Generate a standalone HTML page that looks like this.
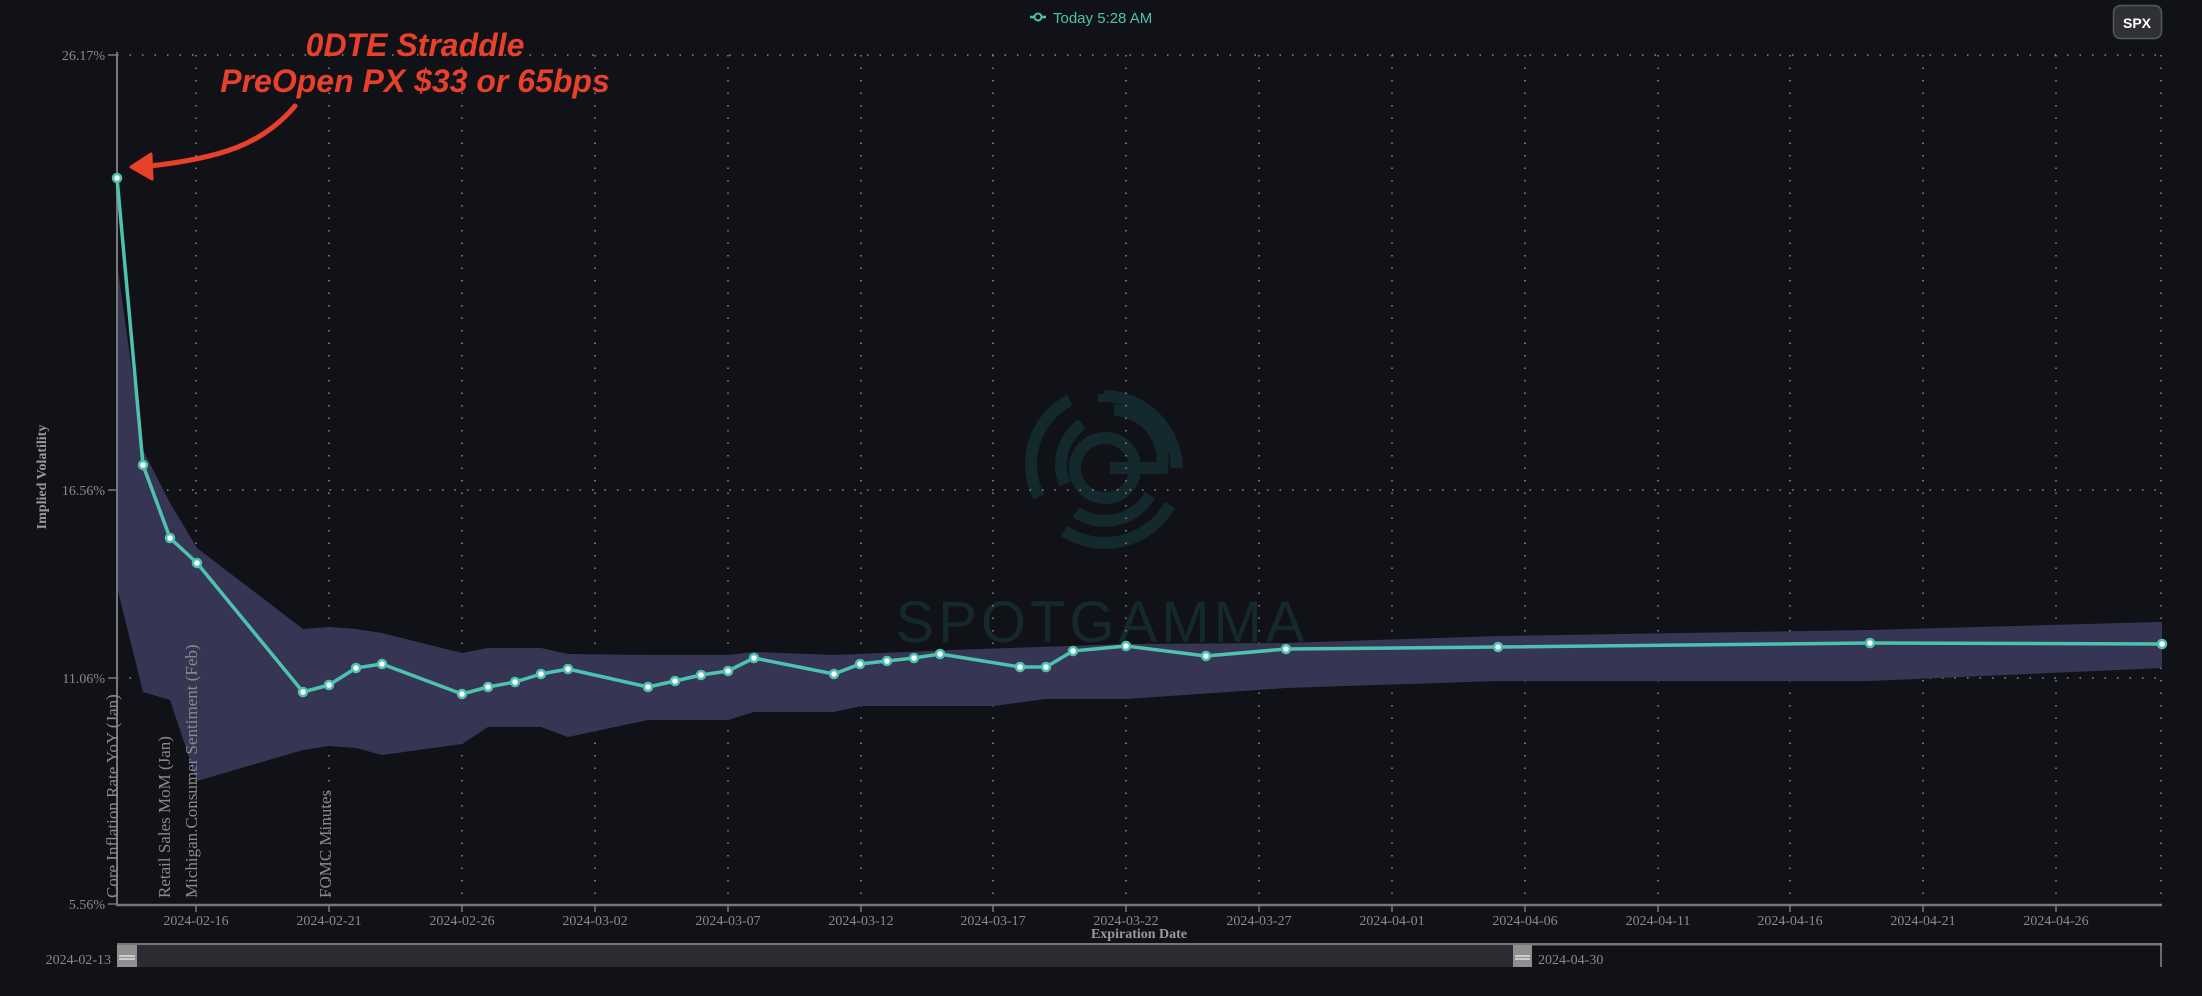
<!DOCTYPE html>
<html><head><meta charset="utf-8"><style>
html,body{margin:0;padding:0;background:#101217;}
body{width:2202px;height:996px;overflow:hidden;position:relative;}
</style></head><body>
<svg width="2202" height="996" viewBox="0 0 2202 996" xmlns="http://www.w3.org/2000/svg" style="position:absolute;left:0;top:0">
<rect width="2202" height="996" fill="#101217"/>
<!-- watermark -->
<g fill="none" stroke="#14292d" stroke-width="12">
<path d="M1070 400 A72 72 0 0 0 1039 497"/>
<path d="M1104 394 L1104 396 A74 74 0 0 1 1177 468"/>
<path d="M1170 505 A75 75 0 0 1 1064 531"/>
<path d="M1082 424 A50 50 0 0 0 1065 484"/>
<path d="M1114 410 A50 50 0 0 1 1162 468 L1110 468"/>
<path d="M1150 495 A52 52 0 0 1 1076 512"/>
<circle cx="1105" cy="468" r="30"/>
</g>
<text x="1102" y="642" text-anchor="middle" font-family="Liberation Sans, sans-serif" font-size="58" fill="#14292d" letter-spacing="4">SPOTGAMMA</text>
<!-- grid -->
<g stroke="#8a8a8a" stroke-width="1.5" stroke-dasharray="1.5 11">
<line x1="117" y1="55" x2="2162" y2="55"/>
<line x1="117" y1="490" x2="2162" y2="490"/>
<line x1="117" y1="678" x2="2162" y2="678"/>
<line x1="196" y1="55" x2="196" y2="904"/>
<line x1="329" y1="55" x2="329" y2="904"/>
<line x1="462" y1="55" x2="462" y2="904"/>
<line x1="595" y1="55" x2="595" y2="904"/>
<line x1="728" y1="55" x2="728" y2="904"/>
<line x1="861" y1="55" x2="861" y2="904"/>
<line x1="993" y1="55" x2="993" y2="904"/>
<line x1="1126" y1="55" x2="1126" y2="904"/>
<line x1="1259" y1="55" x2="1259" y2="904"/>
<line x1="1392" y1="55" x2="1392" y2="904"/>
<line x1="1525" y1="55" x2="1525" y2="904"/>
<line x1="1658" y1="55" x2="1658" y2="904"/>
<line x1="1790" y1="55" x2="1790" y2="904"/>
<line x1="1923" y1="55" x2="1923" y2="904"/>
<line x1="2056" y1="55" x2="2056" y2="904"/>
<line x1="2161" y1="55" x2="2161" y2="904"/>
</g>
<!-- band -->
<path fill="#363654" d="M117 263 L143 450 L170 503 L197 548 L303 629 L329 627 L356 629 L382 633 L462 653 L488 648 L541 648 L568 654 L648 655 L728 655 L754 652 L834 655 L951 650 L1126 644 L1286 643 L1498 636 L1870 630 L2162 622 L2162 668 L1870 681 L1498 681 L1286 688 L1126 699 L1046 699 L993 706 L861 706 L834 712 L754 712 L728 720 L648 720 L568 737 L541 727 L488 727 L462 744 L382 755 L356 748 L329 746 L303 750 L197 781 L170 700 L143 692 L117 587 Z"/>
<!-- axes -->
<line x1="117" y1="52" x2="117" y2="905" stroke="#777" stroke-width="2"/>
<line x1="116" y1="905" x2="2162" y2="905" stroke="#777" stroke-width="2.5"/>
<g stroke="#777" stroke-width="1.5">
<line x1="108" y1="55" x2="117" y2="55"/><line x1="108" y1="490" x2="117" y2="490"/><line x1="108" y1="678" x2="117" y2="678"/><line x1="108" y1="904" x2="117" y2="904"/>
<line x1="196" y1="905" x2="196" y2="912"/><line x1="329" y1="905" x2="329" y2="912"/><line x1="462" y1="905" x2="462" y2="912"/><line x1="595" y1="905" x2="595" y2="912"/><line x1="728" y1="905" x2="728" y2="912"/><line x1="861" y1="905" x2="861" y2="912"/><line x1="993" y1="905" x2="993" y2="912"/><line x1="1126" y1="905" x2="1126" y2="912"/><line x1="1259" y1="905" x2="1259" y2="912"/><line x1="1392" y1="905" x2="1392" y2="912"/><line x1="1525" y1="905" x2="1525" y2="912"/><line x1="1658" y1="905" x2="1658" y2="912"/><line x1="1790" y1="905" x2="1790" y2="912"/><line x1="1923" y1="905" x2="1923" y2="912"/><line x1="2056" y1="905" x2="2056" y2="912"/>
</g>
<g font-family="Liberation Serif, serif" font-size="14" fill="#8a8a8a" text-anchor="end">
<text x="105" y="60">26.17%</text><text x="105" y="495">16.56%</text><text x="105" y="683">11.06%</text><text x="105" y="909">5.56%</text>
</g>
<g font-family="Liberation Serif, serif" font-size="14" fill="#8a8a8a" text-anchor="middle">
<text x="196" y="925">2024-02-16</text><text x="329" y="925">2024-02-21</text><text x="462" y="925">2024-02-26</text><text x="595" y="925">2024-03-02</text><text x="728" y="925">2024-03-07</text><text x="861" y="925">2024-03-12</text><text x="993" y="925">2024-03-17</text><text x="1126" y="925">2024-03-22</text><text x="1259" y="925">2024-03-27</text><text x="1392" y="925">2024-04-01</text><text x="1525" y="925">2024-04-06</text><text x="1658" y="925">2024-04-11</text><text x="1790" y="925">2024-04-16</text><text x="1923" y="925">2024-04-21</text><text x="2056" y="925">2024-04-26</text>
</g>
<text x="1139" y="938" text-anchor="middle" font-family="Liberation Serif, serif" font-weight="bold" font-size="14" fill="#9a9a9a">Expiration Date</text>
<text transform="translate(46,477) rotate(-90)" text-anchor="middle" font-family="Liberation Serif, serif" font-weight="bold" font-size="14" fill="#9a9a9a">Implied Volatility</text>
<!-- event labels -->
<g font-family="Liberation Serif, serif" font-size="17" fill="#8a8a8a">
<text transform="translate(118,898) rotate(-90)">Core Inflation Rate YoY (Jan)</text>
<text transform="translate(170,898) rotate(-90)">Retail Sales MoM (Jan)</text>
<text transform="translate(197,898) rotate(-90)">Michigan Consumer Sentiment (Feb)</text>
<text transform="translate(331,898) rotate(-90)">FOMC Minutes</text>
</g>
<!-- line -->
<polyline fill="none" stroke="#4ec2ae" stroke-width="3.5" stroke-linejoin="round" points="117,178 143,465 170,538 197,563 303,692 329,685 356,668 382,664 462,694 488,687 515,682 541,674 568,669 648,687 675,681 701,675 728,671 754,658 834,674 860,664 887,661 914,658 940,654 1020,667 1046,667 1073,651 1126,646 1206,656 1286,649 1498,647 1870,643 2162,644"/>
<g fill="#ffffff" stroke="#4ec2ae" stroke-width="2.5">
<circle cx="117" cy="178" r="4"/><circle cx="143" cy="465" r="4"/><circle cx="170" cy="538" r="4"/><circle cx="197" cy="563" r="4"/><circle cx="303" cy="692" r="4"/><circle cx="329" cy="685" r="4"/><circle cx="356" cy="668" r="4"/><circle cx="382" cy="664" r="4"/><circle cx="462" cy="694" r="4"/><circle cx="488" cy="687" r="4"/><circle cx="515" cy="682" r="4"/><circle cx="541" cy="674" r="4"/><circle cx="568" cy="669" r="4"/><circle cx="648" cy="687" r="4"/><circle cx="675" cy="681" r="4"/><circle cx="701" cy="675" r="4"/><circle cx="728" cy="671" r="4"/><circle cx="754" cy="658" r="4"/><circle cx="834" cy="674" r="4"/><circle cx="860" cy="664" r="4"/><circle cx="887" cy="661" r="4"/><circle cx="914" cy="658" r="4"/><circle cx="940" cy="654" r="4"/><circle cx="1020" cy="667" r="4"/><circle cx="1046" cy="667" r="4"/><circle cx="1073" cy="651" r="4"/><circle cx="1126" cy="646" r="4"/><circle cx="1206" cy="656" r="4"/><circle cx="1286" cy="649" r="4"/><circle cx="1498" cy="647" r="4"/><circle cx="1870" cy="643" r="4"/><circle cx="2162" cy="644" r="4"/>
</g>
<!-- navigator -->
<rect x="117" y="943" width="2045" height="2.5" fill="#777"/>
<line x1="2161" y1="943" x2="2161" y2="967" stroke="#888" stroke-width="1.5"/>
<rect x="137" y="945" width="1376" height="22" fill="#2b2c31"/>
<rect x="117" y="945" width="20" height="22" fill="#8f8f8f"/>
<rect x="1513" y="945" width="19" height="22" fill="#8f8f8f"/>
<g stroke="#eee" stroke-width="1.3"><line x1="119" y1="956" x2="135" y2="956"/><line x1="119" y1="959" x2="135" y2="959"/><line x1="1515" y1="956" x2="1530" y2="956"/><line x1="1515" y1="959" x2="1530" y2="959"/></g>
<g font-family="Liberation Serif, serif" font-size="14" fill="#8a8a8a">
<text x="111" y="964" text-anchor="end">2024-02-13</text><text x="1538" y="964">2024-04-30</text>
</g>
<!-- legend -->
<line x1="1030" y1="17" x2="1046" y2="17" stroke="#4ec2ae" stroke-width="2.5"/>
<circle cx="1038" cy="17" r="3.5" fill="#101217" stroke="#4ec2ae" stroke-width="2"/>
<text x="1053" y="23" font-family="Liberation Sans, sans-serif" font-size="15" fill="#4ec2ae">Today 5:28 AM</text>
<rect x="2113.5" y="5.5" width="48" height="33" rx="7" fill="#2f3136" stroke="#55585e" stroke-width="1.5"/>
<text x="2137" y="28" text-anchor="middle" font-family="Liberation Sans, sans-serif" font-weight="bold" font-size="14" fill="#fff">SPX</text>
<!-- annotation -->
<g font-family="Liberation Sans, sans-serif" font-weight="bold" font-style="italic" font-size="32" fill="#e8402a" text-anchor="middle">
<text x="415" y="56">0DTE Straddle</text>
<text x="415" y="92">PreOpen PX $33 or 65bps</text>
</g>
<path d="M295 106 C262 145 220 158 150 166" fill="none" stroke="#e8402a" stroke-width="5" stroke-linecap="round"/>
<path d="M131 167 L151 154 L152 179 Z" fill="#e8402a" stroke="#e8402a" stroke-width="3" stroke-linejoin="round"/>
</svg>
</body></html>
